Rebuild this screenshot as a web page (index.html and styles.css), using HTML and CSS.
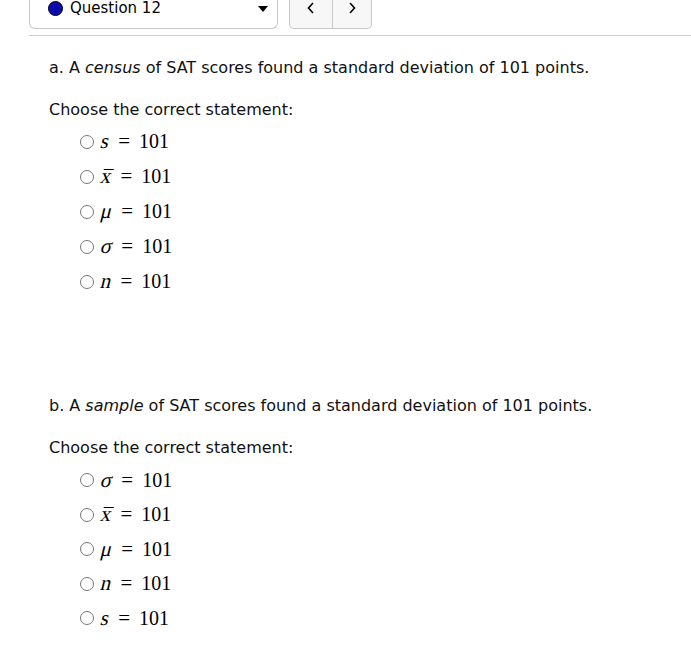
FILE: index.html
```html
<!DOCTYPE html>
<html>
<head>
<meta charset="utf-8">
<link rel="stylesheet" href="styles.css">
</head>
<body>
<div class="topbar">
  <div class="select">
    <span class="dot"></span>
    <span class="qlabel">Question 12</span>
    <span class="caret"></span>
  </div>
  <div class="nav">
    <span class="navbtn">
      <svg width="10" height="14" viewBox="0 0 10 14"><path d="M7 2 L2.5 7 L7 12" fill="none" stroke="#000" stroke-width="1.6"/></svg>
    </span>
    <span class="navbtn">
      <svg width="10" height="14" viewBox="0 0 10 14"><path d="M3 2 L7.5 7 L3 12" fill="none" stroke="#000" stroke-width="1.6"/></svg>
    </span>
  </div>
</div>
<div class="rule"></div>

<div class="content">
  <section class="part">
    <p class="prompt">a. A <em>census</em> of SAT scores found a standard deviation of 101 points.</p>
    <p class="choose">Choose the correct statement:</p>
    <ul class="opts">
      <li><span class="radio"></span><span class="math"><span class="v">s</span><span class="eq">=</span><span class="n">101</span></span></li>
      <li><span class="radio"></span><span class="math"><span class="v bar">x</span><span class="eq">=</span><span class="n">101</span></span></li>
      <li><span class="radio"></span><span class="math"><span class="v">μ</span><span class="eq">=</span><span class="n">101</span></span></li>
      <li><span class="radio"></span><span class="math"><span class="v">σ</span><span class="eq">=</span><span class="n">101</span></span></li>
      <li><span class="radio"></span><span class="math"><span class="v">n</span><span class="eq">=</span><span class="n">101</span></span></li>
    </ul>
  </section>

  <section class="part partb">
    <p class="prompt">b. A <em>sample</em> of SAT scores found a standard deviation of 101 points.</p>
    <p class="choose">Choose the correct statement:</p>
    <ul class="opts">
      <li><span class="radio"></span><span class="math"><span class="v">σ</span><span class="eq">=</span><span class="n">101</span></span></li>
      <li><span class="radio"></span><span class="math"><span class="v bar">x</span><span class="eq">=</span><span class="n">101</span></span></li>
      <li><span class="radio"></span><span class="math"><span class="v">μ</span><span class="eq">=</span><span class="n">101</span></span></li>
      <li><span class="radio"></span><span class="math"><span class="v">n</span><span class="eq">=</span><span class="n">101</span></span></li>
      <li><span class="radio"></span><span class="math"><span class="v">s</span><span class="eq">=</span><span class="n">101</span></span></li>
    </ul>
  </section>
</div>
</body>
</html>
```

FILE: styles.css
```css
html, body {
  margin: 0;
  padding: 0;
  background: #fff;
}
body {
  font-family: "DejaVu Sans", Verdana, sans-serif;
  color: #111;
  width: 691px;
  overflow: hidden;
}
.topbar {
  display: flex;
  align-items: flex-start;
  padding-left: 29px;
  gap: 11px;
  height: 30px;
}
.select {
  width: 249px;
  height: 29px;
  box-sizing: border-box;
  border: 1px solid #c8c8c8;
  border-top: none;
  border-radius: 0 0 6px 6px;
  display: flex;
  align-items: flex-start;
  padding-left: 18px;
  padding-right: 9px;
}
.dot {
  width: 13px;
  height: 13px;
  border-radius: 50%;
  background: #0a0ab0;
  border: 1px solid #000;
  margin-top: 1px;
  flex: none;
}
.qlabel {
  font-size: 15px;
  line-height: 17px;
  margin-left: 7px;
  color: #000;
}
.caret {
  margin-left: auto;
  margin-top: 6px;
  width: 0;
  height: 0;
  border-left: 5px solid transparent;
  border-right: 5px solid transparent;
  border-top: 6px solid #000;
}
.nav {
  display: flex;
  height: 29px;
  box-sizing: border-box;
  border: 1px solid #c8c8c8;
  border-top: none;
  border-radius: 0 0 5px 5px;
  background: #f7f7f7;
}
.navbtn {
  width: 42px;
  display: flex;
  justify-content: center;
  padding-top: 1px;
  height: 27px;
}
.navbtn + .navbtn {
  border-left: 1px solid #c8c8c8;
  width: 38px;
}
.rule {
  margin-left: 29px;
  margin-top: 5px;
  height: 1px;
  background: #cfcfcf;
}
.content {
  padding-left: 49px;
}
.part {
  padding-top: 20px;
}
.partb {
  padding-top: 95px;
}
.prompt, .choose {
  margin: 0;
  font-size: 16px;
  line-height: 24px;
  color: #111;
}
.choose {
  margin-top: 18px;
}
.opts {
  list-style: none;
  margin: 2px 0 0 0;
  padding: 0 0 0 31px;
}
.opts li {
  display: flex;
  align-items: center;
  height: 35px;
}
.partb .opts li {
  height: 34.5px;
}
.partb .opts {
  margin-top: 3px;
}
.radio {
  width: 12px;
  height: 12px;
  border: 1px solid #777;
  border-radius: 50%;
  flex: none;
}
.math {
  font-family: "Liberation Serif", "Times New Roman", serif;
  font-size: 20px;
  color: #000;
  margin-left: 7px;
  display: flex;
  align-items: baseline;
}
.v {
  display: inline-block;
  font-family: "Liberation Serif", "Times New Roman", serif;
  font-size: 21px;
  transform: skewX(-14deg);
  position: relative;
}
.eq {
  margin: 0 9px;
  font-size: 21px;
}
.bar::before {
  content: "";
  position: absolute;
  left: 1px;
  right: 0;
  top: 5px;
  height: 1px;
  background: #000;
}
```
